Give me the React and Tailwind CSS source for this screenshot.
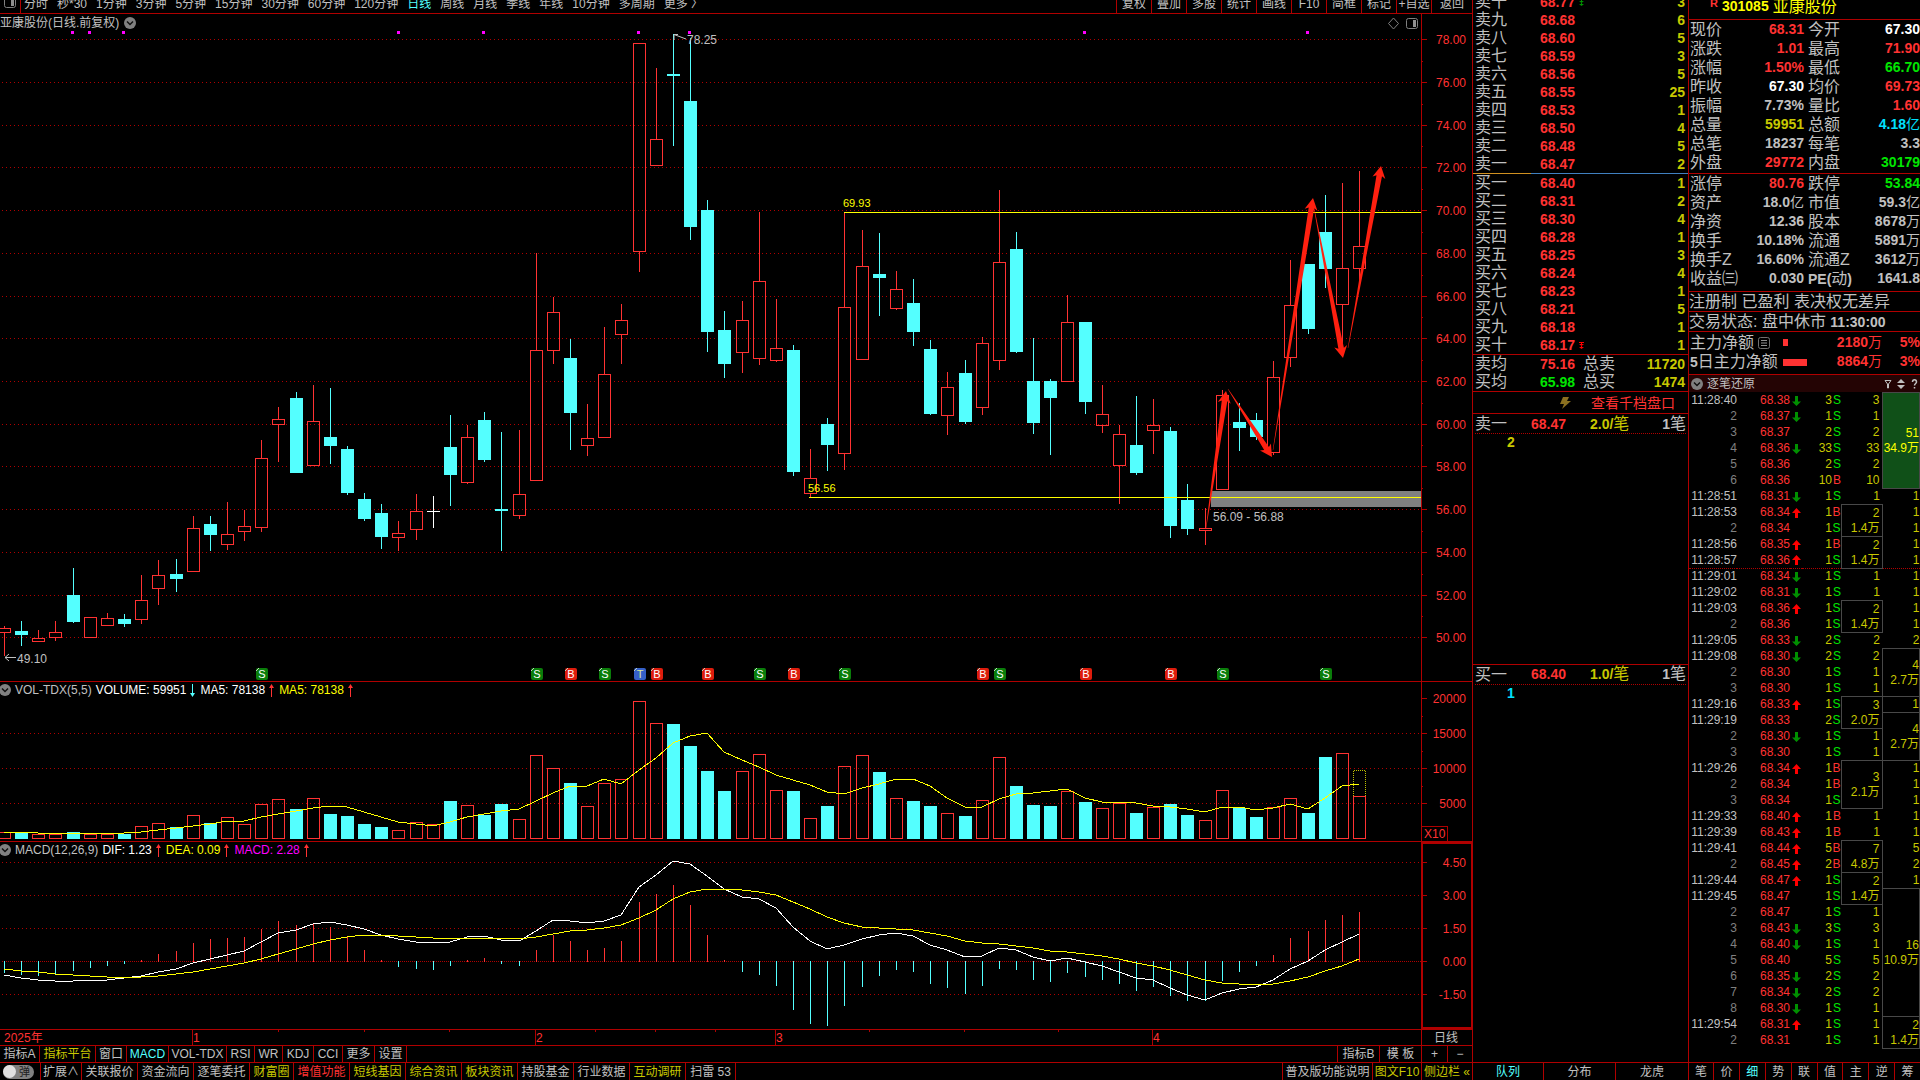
import React from "react";

const RED = "#ff3232";
const CYAN = "#54ffff";
const LINE = "#b00000";

/* kind, high, body top, body bottom, low */
const CANDLES = [
  ["R", 626, 628, 632, 656], ["C", 621, 631, 635, 646], ["R", 630, 638, 641, 641], ["R", 621, 632, 637, 641],
  ["C", 568, 595, 622, 623], ["R", 617, 617, 637, 637], ["R", 613, 618, 625, 625], ["C", 614, 619, 624, 627],
  ["R", 575, 600, 619, 624], ["R", 560, 575, 588, 605], ["C", 559, 574, 579, 592], ["R", 516, 528, 571, 571],
  ["C", 516, 524, 535, 551], ["R", 502, 534, 544, 550], ["R", 510, 526, 531, 541], ["R", 440, 458, 527, 532],
  ["R", 407, 419, 424, 462], ["C", 392, 398, 473, 473], ["R", 385, 421, 465, 465], ["C", 388, 437, 446, 464],
  ["C", 446, 449, 493, 495], ["C", 493, 499, 519, 521], ["C", 504, 513, 537, 549], ["R", 521, 533, 537, 551],
  ["R", 494, 511, 529, 540], ["W", 496, 511, 512, 528], ["C", 415, 447, 475, 506], ["R", 425, 437, 482, 484],
  ["C", 412, 420, 460, 462], ["C", 432, 509, 511, 551], ["R", 430, 494, 515, 519], ["R", 253, 350, 480, 480],
  ["R", 297, 312, 350, 364], ["C", 339, 358, 413, 450], ["R", 404, 438, 445, 456], ["R", 327, 374, 437, 437],
  ["R", 304, 320, 334, 364], ["R", 43, 43, 251, 272], ["R", 68, 139, 165, 165], ["C", 34, 74, 76, 146],
  ["C", 38, 101, 227, 240], ["C", 200, 210, 332, 352], ["C", 311, 330, 364, 378], ["R", 301, 320, 352, 373],
  ["R", 212, 281, 358, 365], ["R", 299, 348, 360, 362], ["C", 345, 350, 472, 476], ["R", 449, 478, 493, 497],
  ["C", 418, 424, 445, 471], ["R", 212, 307, 453, 470], ["R", 230, 266, 359, 359], ["C", 233, 274, 278, 316],
  ["R", 271, 289, 308, 310], ["C", 279, 303, 332, 346], ["C", 340, 349, 414, 415], ["R", 372, 387, 415, 435],
  ["C", 360, 373, 422, 424], ["R", 337, 343, 407, 415], ["R", 190, 262, 360, 370], ["C", 232, 249, 352, 353],
  ["C", 338, 381, 423, 434], ["C", 379, 381, 398, 455], ["R", 295, 322, 381, 381], ["C", 322, 322, 402, 414],
  ["R", 385, 414, 425, 433], ["R", 425, 434, 465, 504], ["C", 396, 445, 473, 475], ["R", 399, 425, 430, 454],
  ["C", 427, 431, 526, 538], ["C", 484, 500, 529, 535], ["R", 508, 528, 530, 545], ["R", 390, 395, 489, 489],
  ["C", 403, 422, 428, 451], ["C", 413, 420, 437, 440], ["R", 361, 377, 452, 455], ["R", 260, 305, 357, 367],
  ["C", 264, 264, 329, 334], ["C", 195, 232, 269, 288], ["R", 183, 268, 304, 347], ["R", 171, 246, 268, 285],
];

const VOLUME_TOPS = [
  832, 833, 834, 834, 832, 834, 834, 834, 826, 823, 827, 815, 823, 817, 824, 804, 799, 809, 798, 814,
  816, 824, 827, 830, 822, 824, 801, 805, 815, 804, 819, 755, 768, 783, 806, 783, 779, 701, 723, 724,
  746, 771, 791, 771, 754, 790, 791, 818, 806, 766, 755, 772, 798, 801, 806, 813, 816, 800, 757, 786,
  805, 806, 791, 802, 808, 803, 813, 807, 804, 815, 820, 790, 808, 817, 807, 798, 813, 757, 753, 796,
];

const MA5 = [
  832, 832, 833, 833, 833, 833, 833, 833, 832, 830, 828, 826, 824, 821, 821, 817, 814, 811, 808, 806,
  807, 812, 817, 822, 824, 826, 822, 817, 814, 811, 809, 801, 793, 786, 786, 779, 784, 770, 758, 743,
  736, 733, 752, 760, 767, 775, 780, 785, 792, 794, 788, 784, 779, 779, 786, 798, 807, 807, 799, 794,
  793, 791, 789, 798, 802, 802, 803, 806, 807, 809, 812, 807, 807, 810, 808, 804, 809, 798, 786, 784,
];

const MACD_ENDS = [
  973, 975, 976, 975, 971, 968, 966, 964, 960, 954, 951, 943, 939, 938, 937, 929, 921, 925, 923, 927,
  937, 950, 960, 967, 969, 970, 966, 960, 958, 964, 966, 950, 935, 941, 950, 948, 941, 902, 894, 885,
  905, 935, 960, 972, 975, 986, 1010, 1024, 1026, 1006, 987, 976, 970, 972, 984, 988, 994, 986, 969, 970,
  980, 982, 973, 977, 980, 984, 991, 987, 996, 1001, 1001, 981, 972, 966, 955, 938, 931, 920, 915, 912,
];

const DIF = [
  975, 978, 980, 981, 981, 980, 980, 978, 976, 972, 969, 963, 959, 955, 951, 942, 933, 930, 924, 922,
  925, 929, 935, 939, 942, 943, 942, 937, 936, 940, 941, 931, 920, 921, 923, 921, 915, 887, 875, 861,
  864, 876, 889, 897, 899, 908, 927, 941, 949, 945, 939, 935, 933, 936, 945, 950, 957, 956, 948, 950,
  957, 961, 958, 962, 966, 972, 978, 980, 988, 995, 1000, 993, 989, 987, 980, 969, 961, 950, 942, 934,
];

const DEA = [
  969, 971, 972, 974, 975, 976, 977, 977, 977, 976, 974, 972, 969, 966, 963, 959, 954, 949, 944, 940,
  937, 935, 935, 936, 937, 938, 939, 938, 938, 938, 939, 937, 934, 931, 930, 928, 925, 918, 910, 899,
  892, 889, 889, 890, 892, 895, 902, 909, 917, 923, 927, 928, 929, 930, 933, 936, 941, 943, 944, 946,
  948, 951, 952, 954, 956, 959, 963, 966, 970, 975, 980, 983, 984, 985, 984, 981, 977, 971, 966, 959,
];

const BADGES = [
  [15, "S"], [31, "S"], [33, "B"], [35, "S"], [37, "T"], [38, "B"], [41, "B"], [44, "S"], [46, "B"],
  [49, "S"], [57, "B"], [58, "S"], [63, "B"], [68, "B"], [71, "S"], [77, "S"],
];
const BADGE_FILL = { S: "#0a7d0a", B: "#dd1c0c", T: "#3560c8" };

const ARROWS = [
  [1206, 528, 1226, 391],
  [1228, 389, 1272, 457],
  [1273, 450, 1313, 198],
  [1314, 208, 1343, 358],
  [1348, 348, 1381, 166],
];

const px = (i) => 4 + Math.round(i * 17.152);
const line = (ys) => ys.map((y, i) => `${px(i)},${y}`).join(" ");

function arrowPoints([x0, y0, x1, y1]) {
  const d = Math.hypot(x1 - x0, y1 - y0);
  const ux = (x1 - x0) / d;
  const uy = (y1 - y0) / d;
  const at = (t, s) => `${(x0 + ux * t - uy * s).toFixed(1)},${(y0 + uy * t + ux * s).toFixed(1)}`;
  return [at(0, 0.2), at(d - 10, 2.8), at(d - 12, 6.5), at(d, 0), at(d - 12, -6.5), at(d - 10, -2.8), at(0, -0.2)].join(" ");
}

function Grid({ ys }) {
  return ys.map((y) => (
    <line key={y} x1="2" x2="1421" y1={y + 0.5} y2={y + 0.5} stroke={LINE} strokeDasharray="1 3" />
  ));
}

function Axis({ labels, minor }) {
  return (
    <>
      {labels.map(([y, t]) => (
        <g key={t}>
          <line x1="1421" x2="1427" y1={y + 0.5} y2={y + 0.5} stroke={LINE} />
          <text x="1466" y={y + 5} textAnchor="end" fill={RED} fontSize="12">{t}</text>
        </g>
      ))}
      {minor.map((y) => (
        <line key={y} x1="1421" x2="1423" y1={y + 0.5} y2={y + 0.5} stroke={LINE} />
      ))}
    </>
  );
}

const PRICE_YS = [39, 82, 125, 167, 210, 253, 296, 338, 381, 424, 466, 509, 552, 595, 637];

function PriceChart() {
  return (
    <svg viewBox="0 14 1472 668" className="block h-auto w-full" shapeRendering="crispEdges" role="img" aria-label="日线图">
      <Grid ys={PRICE_YS} />
      {CANDLES.map(([k, h, t, b, l], i) => {
        const x = px(i);
        if (k === "R")
          return (
            <g key={i} stroke={RED} fill="none">
              <path d={`M${x + 0.5} ${h}V${t}M${x + 0.5} ${b + 1}V${l}`} />
              <rect x={x - 5.5} y={t + 0.5} width="12" height={b - t} />
            </g>
          );
        const c = k === "C" ? CYAN : "#ffffff";
        return (
          <g key={i} fill={c}>
            <rect x={x} y={h} width="1" height={l - h} />
            <rect x={x - 6} y={t} width="13" height={b - t} />
          </g>
        );
      })}
      {[72, 89, 123, 398, 483, 638, 689, 1084, 1307].map((x) => (
        <rect key={x} x={x - 1} y="31" width="3" height="3" fill="#ff00ff" />
      ))}
      <rect x="1211" y="491" width="210" height="16" fill="#808080" />
      <path d="M844 212.5H1421M809 497.5H1421" stroke="#ffff00" />
      <text x="843" y="207" fontSize="11" fill="#ffff00">69.93</text>
      <text x="808" y="492" fontSize="11" fill="#ffff00">56.56</text>
      <text x="1213" y="521" fontSize="12" fill="#c0c0c0">56.09 - 56.88</text>
      <g fill="none" stroke="#c0c0c0" shapeRendering="auto">
        <path d="M674 34.5L686 39M674 40V34.500h4" />
        <path d="M5 657.500H16M9 654L5 657.500L9 661" />
      </g>
      <text x="687" y="44" fontSize="12" fill="#c0c0c0">78.25</text>
      <text x="17" y="663" fontSize="12" fill="#c0c0c0">49.10</text>
      {BADGES.map(([i, t]) => (
        <g key={i}>
          <rect x={px(i) - 5} y="668" width="12" height="12" rx="2" fill={BADGE_FILL[t]} shapeRendering="auto" />
          <path d={`M${px(i) - 5} 671L${px(i) - 2} 668`} stroke="#c0d0c0" fill="none" shapeRendering="auto" />
          <text x={px(i) + 1} y="678" textAnchor="middle" fontSize="11" fill={t === "T" ? "#d8e8a0" : "#ffffff"}>{t}</text>
        </g>
      ))}
      <g fill="#ff2010" shapeRendering="auto">
        {ARROWS.map((a) => (
          <polygon key={a[0]} points={arrowPoints(a)} />
        ))}
      </g>
      <path d="M1421.5 14V681M0 681.5H1472" stroke={LINE} />
      <Axis
        labels={PRICE_YS.map((y, i) => [y, (78 - 2 * i).toFixed(2)])}
        minor={[61, 104, 146, 189, 232, 275, 317, 360, 403, 445, 488, 531, 574, 616]}
      />
      <g fill="none" stroke="#808080" shapeRendering="auto">
        <path d="M1393.500 18L1398.500 23.500L1393.500 29L1388.500 23.500Z" />
        <rect x="1406.500" y="18.500" width="11" height="10" rx="2" />
      </g>
      <rect x="1413" y="20" width="3" height="7" fill="#909090" />
    </svg>
  );
}

function VolumeChart() {
  return (
    <svg viewBox="0 682 1472 160" className="block h-auto w-full" shapeRendering="crispEdges" role="img" aria-label="成交量">
      <Grid ys={[733, 768, 803]} />
      {VOLUME_TOPS.map((t, i) =>
        CANDLES[i][0] === "C" ? (
          <rect key={i} x={px(i) - 6} y={t} width="13" height={839 - t} fill={CYAN} />
        ) : (
          <rect key={i} x={px(i) - 5.5} y={t + 0.5} width="12" height={838 - t} fill="none" stroke={RED} />
        )
      )}
      <path d="M1353.500 796V770.500H1365.500V796" fill="none" stroke="#c0c000" strokeDasharray="1 1" />
      <polyline points={line(MA5)} fill="none" stroke="#ffff00" />
      <path d="M1421.500 682V841M0 841.500H1472M1421 826.500H1447.500V841" stroke={LINE} fill="none" />
      <Axis labels={[[698, "20000"], [733, "15000"], [768, "10000"], [803, "5000"]]} minor={[716, 751, 786]} />
      <text x="1424" y="838" fontSize="12" fill={RED}>X10</text>
    </svg>
  );
}

function MacdChart() {
  return (
    <svg viewBox="0 842 1472 204" className="block h-auto w-full" shapeRendering="crispEdges" role="img" aria-label="MACD">
      <Grid ys={[862, 895, 928, 994]} />
      <line x1="2" x2="1421" y1="961.500" y2="961.500" stroke={LINE} strokeDasharray="1 1" />
      {MACD_ENDS.map((e, i) => (
        <line key={i} x1={px(i) + 0.5} x2={px(i) + 0.5} y1={e <= 961 ? 962 : 961} y2={e} stroke={e <= 961 ? RED : CYAN} />
      ))}
      <polyline points={line(DIF)} fill="none" stroke="#ffffff" />
      <polyline points={line(DEA)} fill="none" stroke="#ffff00" />
      <path d="M0 1029.500H1472M0 1045.500H1472M1421.500 1030V1046M192.500 1030V1046M535.500 1030V1046M775.500 1030V1046M1152.500 1030V1046" stroke={LINE} />
      {[278, 364, 449, 595, 655, 715, 869, 964, 1058].map((x) => (
        <line key={x} x1={x + 0.5} x2={x + 0.5} y1="1030" y2="1032" stroke={LINE} />
      ))}
      <rect x="1422" y="843" width="50" height="185" fill="none" stroke={LINE} strokeWidth="2" />
      <Axis
        labels={[[862, "4.50"], [895, "3.00"], [928, "1.50"], [961, "0.00"], [994, "-1.50"]]}
        minor={[879, 912, 945, 978]}
      />
      <g fontSize="12" fill={RED}>
        <text x="4" y="1042">2025年</text>
        <text x="193" y="1042">1</text>
        <text x="536" y="1042">2</text>
        <text x="776" y="1042">3</text>
        <text x="1153" y="1042">4</text>
      </g>
      <text x="1446" y="1042" textAnchor="middle" fontSize="12" fill="#c0c0c0">日线</text>
    </svg>
  );
}

function Chevron() {
  return (
    <svg viewBox="0 0 12 12" className="size-3 shrink-0" aria-hidden="true">
      <circle cx="6" cy="6" r="6" fill="#808080" />
      <path d="M3 4.500L6 7.500L9 4.500" fill="none" stroke="#101010" strokeWidth="1.500" />
    </svg>
  );
}

function ThinArrow({ down }) {
  return (
    <svg viewBox="0 0 5 13" className="h-[13px] w-[5px] shrink-0" aria-hidden="true">
      {down ? (
        <path d="M2 0h1v9h2l-2.500 4L0 9h2z" fill={CYAN} />
      ) : (
        <path d="M2 13h1V4h2L2.500 0L0 4h2z" fill={RED} />
      )}
    </svg>
  );
}

const PERIODS = ["分时", "秒*30", "1分钟", "3分钟", "5分钟", "15分钟", "30分钟", "60分钟", "120分钟", "日线", "周线", "月线", "季线", "年线", "10分钟", "多周期", "更多 〉"];
const TOOLS = ["复权", "叠加", "多股", "统计", "画线", "F10", "简框", "标记", "+自选", "返回"];

function TopBar() {
  return (
    <nav className="flex h-[14px] items-end overflow-hidden border-b border-[#b00000] text-xs leading-[18px]">
      <button aria-label="侧栏" className="flex h-[18px] w-[21px] items-center justify-center border-r border-[#b00000]">
        <svg viewBox="0 0 12 12" className="mb-1 h-3 w-3" aria-hidden="true">
          <rect x="0.500" y="0.500" width="11" height="11" rx="2" fill="none" stroke="#808080" />
          <rect x="7" y="2" width="3" height="8" fill="#909090" />
        </svg>
      </button>
      <div className="flex h-[18px] flex-1 gap-[9px] pl-[3px] whitespace-nowrap">
        {PERIODS.map((p) => (
          <button key={p} className={p === "日线" ? "text-[#54ffff]" : ""}>{p}</button>
        ))}
      </div>
      {TOOLS.map((t) => (
        <button key={t} className="h-[18px] w-[35px] shrink-0 border-l border-[#b00000] whitespace-nowrap last:w-[41px]">{t}</button>
      ))}
    </nav>
  );
}

const INDICATORS = [
  ["指标A", "w-[40px]"], ["指标平台", "w-[56px] text-[#c8c800]"], ["窗口", "w-[31px]"], ["MACD", "w-[42px] text-[#54ffff]"],
  ["VOL-TDX", "w-[58px]"], ["RSI", "w-[28px]"], ["WR", "w-[28px]"], ["KDJ", "w-[31px]"], ["CCI", "w-[29px]"], ["更多", "w-[32px]"], ["设置", "w-[32px]"],
];
const FEATURES = [
  ["扩展∧", "w-[41px]"], ["关联报价", "w-[56px]"], ["资金流向", "w-[56px]"], ["逐笔委托", "w-[56px]"], ["财富圈", "w-[44px] text-[#c8c800]"],
  ["增值功能", "w-[56px] text-[#ff3232]"], ["短线基因", "w-[56px] text-[#c8c800]"], ["综合资讯", "w-[56px] text-[#c8c800]"],
  ["板块资讯", "w-[56px] text-[#c8c800]"], ["持股基金", "w-[56px]"], ["行业数据", "w-[56px]"], ["互动调研", "w-[56px] text-[#c8c800]"], ["扫雷 53", "w-[50px]"],
];

function Cells({ items, side }) {
  return items.map(([t, c]) => (
    <button key={t} className={`${c} ${side === "l" ? "border-l" : "border-r"} shrink-0 border-[#b00000] whitespace-nowrap`}>{t}</button>
  ));
}

function BottomBars() {
  return (
    <>
      <nav className="flex h-[17px] justify-between border-b border-[#b00000] text-xs leading-4">
        <div className="flex"><Cells items={INDICATORS} side="r" /></div>
        <div className="flex">
          <Cells side="l" items={[["指标B", "w-[42px]"], ["模 板", "w-[42px]"], ["+", "w-[26px]"], ["−", "w-[25px]"]]} />
        </div>
      </nav>
      <nav className="flex h-[17px] justify-between text-xs leading-[18px]">
        <div className="flex">
          <label className="flex w-[41px] items-center border-r border-[#b00000] pl-[3px]">
            <input type="checkbox" className="peer sr-only" />
            <span className="flex h-[14px] w-[31px] items-center justify-between rounded-full bg-[#808080] pr-1 text-[11px] leading-[14px] text-[#202020]">
              <span className="size-[13px] rounded-full bg-[#e0e0e0]" />弹
            </span>
          </label>
          <Cells items={FEATURES} side="r" />
        </div>
        <div className="flex">
          <Cells side="l" items={[["普及版功能说明", "w-[90px]"], ["图文F10", "w-[49px] text-[#c8c800]"], ["侧边栏 «", "w-[51px] text-[#c8c800]"]]} />
        </div>
      </nav>
    </>
  );
}

const SELLS = [
  ["卖十", "68.77", 3, "up"], ["卖九", "68.68", 6], ["卖八", "68.60", 5], ["卖七", "68.59", 3], ["卖六", "68.56", 5],
  ["卖五", "68.55", 25], ["卖四", "68.53", 1], ["卖三", "68.50", 4], ["卖二", "68.48", 5], ["卖一", "68.47", 2],
];
const BUYS = [
  ["买一", "68.40", 1], ["买二", "68.31", 2], ["买三", "68.30", 4], ["买四", "68.28", 1], ["买五", "68.25", 3],
  ["买六", "68.24", 4], ["买七", "68.23", 1], ["买八", "68.21", 5], ["买九", "68.18", 1], ["买十", "68.17", 1, "down"],
];

function Depth({ rows }) {
  return (
    <table className="w-full table-fixed border-collapse">
      <tbody>
        {rows.map(([n, p, q, m]) => (
          <tr key={n} className="h-[18px] leading-[18px]">
            <th className="w-[67px] p-0 pl-[2px] text-left text-base leading-[18px] font-normal">{n}</th>
            <td className="p-0 text-sm leading-[18px] font-bold text-[#ff3232]">
              <span className="flex items-center gap-1">
                {p}
                {m && (
                  <svg viewBox="0 0 5 7" className="h-[7px] w-[5px]" fill={m === "up" ? "#009000" : "#ff0000"} aria-hidden="true">
                    <path d="M0 0h5v1H3v1h2L2.500 4L0 2h2V1H0zM2 4h1v1h2L2.500 7L0 5h2z" />
                  </svg>
                )}
              </span>
            </td>
            <td className="w-[60px] p-0 pr-[3px] text-right text-sm leading-[18px] font-bold text-[#c8c800]">{q}</td>
          </tr>
        ))}
      </tbody>
    </table>
  );
}

function QueueHead({ name, price, avg, count }) {
  return (
    <div className="mx-[2px] flex h-5 items-center border-b border-dotted border-[#b00000] text-base leading-[19px] whitespace-nowrap">
      <span className="w-14">{name}</span>
      <b className="w-[59px] text-sm font-bold text-[#ff3232]">{price}</b>
      <span className="flex-1 text-[#c8c800]"><b className="text-sm font-bold">{avg}/</b>笔</span>
      <span><b className="text-sm font-bold">{count}</b>笔</span>
    </div>
  );
}

function OrderBook() {
  return (
    <section className="flex w-[216px] shrink-0 flex-col border-l border-[#b00000]">
      <div className="flex h-[173px] flex-col justify-end overflow-hidden"><Depth rows={SELLS} /></div>
      <div className="flex h-px"><div className="w-[27%] bg-[#d09020]" /><div className="flex-1 bg-[#4080c0]" /></div>
      <Depth rows={BUYS} />
      <div className="grid grid-cols-[67px_41px_1fr_auto] border-y border-[#b00000] pr-[3px] pl-[2px] text-base leading-[18px]">
        <span>卖均</span><b className="-ml-[2px] text-sm leading-[18px] font-bold text-[#ff3232]">75.16</b><span>总卖</span><b className="text-right text-sm leading-[18px] font-bold text-[#c8c800]">11720</b>
        <span>买均</span><b className="-ml-[2px] text-sm leading-[18px] font-bold text-[#00e600]">65.98</b><span>总买</span><b className="text-right text-sm leading-[18px] font-bold text-[#c8c800]">1474</b>
      </div>
      <div className="flex h-[22px] items-center justify-end gap-5 border-b border-[#b00000] pr-[13px]">
        <svg viewBox="0 0 12 12" className="size-3" aria-hidden="true"><path d="M4 0h6L8 4h4L3 12l2-5H1z" fill="#8a7020" /></svg>
        <a href="#depth" className="text-sm leading-5 text-[#ff3232]">查看千档盘口</a>
      </div>
      <div className="flex flex-[27] flex-col border-b border-[#b00000]">
        <QueueHead name="卖一" price="68.47" avg="2.0" count="1" />
        <b className="pl-[34px] text-sm leading-4 font-bold text-[#c8c800]">2</b>
      </div>
      <div className="flex flex-[43] flex-col">
        <QueueHead name="买一" price="68.40" avg="1.0" count="1" />
        <b className="pl-[34px] text-sm leading-4 font-bold text-[#00e0ff]">1</b>
      </div>
      <nav className="grid h-[18px] grid-cols-[70px_72px_1fr] border-t border-[#b00000] text-xs leading-[19px]">
        <button className="text-[#54ffff]">队列</button>
        <button className="border-l border-[#b00000]">分布</button>
        <button className="border-l border-[#b00000]">龙虎</button>
      </nav>
    </section>
  );
}

const R = "text-[#ff3232]";
const G = "text-[#00e600]";
const W = "text-white";
const N = "text-[#c0c0c0]";
const Y = "text-[#c8c800]";
const B = "text-[#00e0ff]";
const QUOTE_A = [
  ["现价", "68.31", R, "今开", "67.30", W], ["涨跌", "1.01", R, "最高", "71.90", R], ["涨幅", "1.50%", R, "最低", "66.70", G],
  ["昨收", "67.30", W, "均价", "69.73", R], ["振幅", "7.73%", N, "量比", "1.60", R], ["总量", "59951", Y, "总额", "4.18亿", B],
  ["总笔", "18237", N, "每笔", "3.3", N], ["外盘", "29772", R, "内盘", "30179", G],
];
const QUOTE_B = [
  ["涨停", "80.76", R, "跌停", "53.84", G], ["资产", "18.0亿", N, "市值", "59.3亿", N], ["净资", "12.36", N, "股本", "8678万", N],
  ["换手", "10.18%", N, "流通", "5891万", N], ["换手Z", "16.60%", N, "流通Z", "3612万", N], ["收益㈢", "0.030", N, "PE(动)", "1641.8", N],
];

function Num({ v, c }) {
  const m = v.match(/^([\d.%]+)(.*)$/);
  return <dd className={`${c} text-sm leading-[19px]`}><b className="font-bold">{m[1]}</b>{m[2]}</dd>;
}

function Quote({ rows }) {
  return rows.map(([a, b, c, d, e, f]) => (
    <div key={a} className="grid h-[19px] grid-cols-[115px_1fr] text-base leading-[19px] whitespace-nowrap">
      <dl className="flex justify-between pl-px"><dt>{a}</dt><Num v={b} c={c} /></dl>
      <dl className="flex justify-between pl-1">
        <dt>{d.startsWith("PE") ? <><b className="text-sm font-bold">PE(</b>动<b className="text-sm font-bold">)</b></> : d}</dt>
        <Num v={e} c={f} />
      </dl>
    </div>
  ));
}

/* time, price, direction, quantity, side, merged lot, merged order; [rows, quantity, amount, filled] spans rows, null is covered */
const TICKS = [
  ["11:28:40", "68.38", "d", 3, "S", 3, [6, 51, "34.9万", true]],
  [2, "68.37", "d", 1, "S", 1, null],
  [3, "68.37", "", 2, "S", 2, null],
  [4, "68.36", "d", 33, "S", 33, null],
  [5, "68.36", "", 2, "S", 2, null],
  [6, "68.36", "", 10, "B", 10, null],
  ["11:28:51", "68.31", "d", 1, "S", 1, 1],
  ["11:28:53", "68.34", "u", 1, "B", [2, 2, "1.4万"], 1],
  [2, "68.34", "", 1, "S", null, 1],
  ["11:28:56", "68.35", "u", 1, "B", [2, 2, "1.4万"], 1],
  ["11:28:57", "68.36", "u", 1, "S", null, 1],
  ["11:29:01", "68.34", "d", 1, "S", 1, 1],
  ["11:29:02", "68.31", "d", 1, "S", 1, 1],
  ["11:29:03", "68.36", "u", 1, "S", [2, 2, "1.4万"], 1],
  [2, "68.36", "", 1, "S", null, 1],
  ["11:29:05", "68.33", "d", 2, "S", 2, 2],
  ["11:29:08", "68.30", "d", 2, "S", 2, [3, 4, "2.7万"]],
  [2, "68.30", "", 1, "S", 1, null],
  [3, "68.30", "", 1, "S", 1, null],
  ["11:29:16", "68.33", "u", 1, "S", [2, 3, "2.0万"], [1, 1, ""]],
  ["11:29:19", "68.33", "", 2, "S", null, [3, 4, "2.7万"]],
  [2, "68.30", "d", 1, "S", 1, null],
  [3, "68.30", "", 1, "S", 1, null],
  ["11:29:26", "68.34", "u", 1, "B", [3, 3, "2.1万"], 1],
  [2, "68.34", "", 1, "B", null, 1],
  [3, "68.34", "", 1, "S", null, 1],
  ["11:29:33", "68.40", "u", 1, "B", 1, 1],
  ["11:29:39", "68.43", "u", 1, "B", 1, 1],
  ["11:29:41", "68.44", "u", 5, "B", [2, 7, "4.8万"], 5],
  [2, "68.45", "u", 2, "B", null, 2],
  ["11:29:44", "68.47", "u", 1, "S", [2, 2, "1.4万"], 1],
  ["11:29:45", "68.47", "", 1, "S", null, [8, 16, "10.9万"]],
  [2, "68.47", "", 1, "S", 1, null],
  [3, "68.43", "d", 3, "S", 3, null],
  [4, "68.40", "d", 1, "S", 1, null],
  [5, "68.40", "", 5, "S", 5, null],
  [6, "68.35", "d", 2, "S", 2, null],
  [7, "68.34", "d", 2, "S", 2, null],
  [8, "68.30", "d", 1, "S", 1, null],
  ["11:29:54", "68.31", "u", 1, "S", 1, [2, 2, "1.4万"]],
  [2, "68.31", "", 1, "S", 1, null],
];

function Merged({ v, last }) {
  if (v === null) return null;
  const pad = last ? "pr-0" : "pr-[2px]";
  if (!Array.isArray(v)) return <td className={`p-0 ${pad} text-right`}>{v}</td>;
  const [span, qty, amount, filled] = v;
  return (
    <td rowSpan={span} className={`border border-[#484848] p-0 ${pad} text-right align-middle leading-[15px] ${filled ? "bg-[#105018] text-[#ffff00]" : ""}`}>
      <span className="block">{qty}</span>
      {amount && <span className="block whitespace-nowrap">{amount}</span>}
    </td>
  );
}

function Ticks() {
  return (
    <table className="w-full table-fixed border-collapse text-xs text-[#c8c800]">
      <colgroup>
        <col className="w-[48px]" /><col className="w-[53px]" /><col className="w-[12px]" /><col className="w-[30px]" /><col className="w-[9px]" /><col className="w-[41px]" /><col />
      </colgroup>
      <tbody>
        {TICKS.map(([t, p, dir, q, s, a, b], i) => (
          <tr key={i} className={`h-4 leading-[15px] ${i === 10 ? "border-b border-dotted border-b-[#b00000]" : ""}`}>
            <td className={`p-0 text-right ${typeof t === "number" ? "text-[#808080]" : "text-[#c0c0c0]"}`}>{t}</td>
            <td className="p-0 text-right text-[#ff3232]">{p}</td>
            <td className="p-0">
              {dir && (
                <svg viewBox="0 0 9 10" className="mx-auto h-[10px] w-[9px]" role="img" aria-label={dir === "u" ? "升" : "降"}>
                  {dir === "u" ? <path d="M4.500 0L9 5H6V10H3V5H0z" fill="#ff0000" /> : <path d="M4.500 10L9 5.500H6V0H3V5.500H0z" fill="#009000" />}
                </svg>
              )}
            </td>
            <td className="p-0 text-right">{q}</td>
            <td className={`p-0 text-right ${s === "S" ? "text-[#00e600]" : "text-[#ff3232]"}`}>{s}</td>
            <Merged v={a} />
            <Merged v={b} last />
          </tr>
        ))}
      </tbody>
    </table>
  );
}

function QuotePanel() {
  return (
    <section className="flex w-[232px] shrink-0 flex-col overflow-hidden border-l border-[#b00000]">
      <h1 className="flex h-5 items-end gap-1 border-b border-[#b00000] pb-[3px] pl-[21px] text-sm leading-[19px] text-[#ffff00]">
        <span className="mb-[7px] text-[11px] leading-3 font-bold text-[#ff3232]">R</span>
        <b className="font-bold">301085</b><span className="text-base leading-[19px]">亚康股份</span>
      </h1>
      <div className="border-b border-[#b00000] pb-px"><Quote rows={QUOTE_A} /></div>
      <div className="border-b border-[#b00000] pb-[3px]"><Quote rows={QUOTE_B} /></div>
      <p className="h-5 border-b border-[#b00000] text-base leading-[19px] whitespace-nowrap">注册制 已盈利 表决权无差异</p>
      <p className="h-5 border-b border-[#b00000] text-base leading-[19px] whitespace-nowrap">交易状态: 盘中休市 <b className="text-sm font-bold">11:30:00</b></p>
      <div className="grid grid-cols-[93px_40px_59px_1fr] border-b border-[#b00000] pt-px pb-[2px] pl-px text-base leading-[19px] whitespace-nowrap">
        <span className="flex items-center gap-1">主力净额
          <svg viewBox="0 0 12 12" className="size-3 shrink-0" aria-hidden="true"><rect x="0.500" y="0.500" width="11" height="11" rx="2" fill="none" stroke="#707070" /><path d="M3 3.500h6M3 6h6M3 8.500h6" stroke="#909090" /></svg>
        </span>
        <span className="flex items-center"><i className="h-[7px] w-[5px] bg-[#ff3232]" /></span>
        <span className="text-right text-sm leading-[19px] text-[#ff3232]"><b className="font-bold">2180</b>万</span>
        <b className="text-right text-sm leading-[19px] font-bold text-[#ff3232]">5%</b>
        <span><b className="text-sm font-bold">5</b>日主力净额</span>
        <span className="flex items-center"><i className="h-[7px] w-6 bg-[#ff3232]" /></span>
        <span className="text-right text-sm leading-[19px] text-[#ff3232]"><b className="font-bold">8864</b>万</span>
        <b className="text-right text-sm leading-[19px] font-bold text-[#ff3232]">3%</b>
      </div>
      <div className="flex h-[17px] items-center gap-1 bg-[#240404] px-[2px] text-xs">
        <Chevron /><h2 className="flex-1">逐笔还原</h2>
        <svg viewBox="0 0 34 10" className="h-[10px] w-[34px]" aria-hidden="true">
          <path d="M1 1.500h6L4.500 5v4h-1V5z" fill="none" stroke="#c0c0c0" />
          <path d="M13 4L17 0L21 4zM13 6L17 10L21 6z" fill="#c0c0c0" />
          <path d="M28.500 3c0-3 4-3 4 0c0 1.500-2 1.500-2 3.500M30.500 8v1.500" fill="none" stroke="#c0c0c0" strokeWidth="1.500" />
        </svg>
      </div>
      <div className="flex-1"><Ticks /></div>
      <nav className="grid h-[18px] grid-cols-[24px_repeat(8,minmax(0,1fr))] border-t border-[#b00000] text-xs leading-[19px]">
        {["笔", "价", "细", "势", "联", "值", "主", "逆", "筹"].map((t) => (
          <button key={t} className={`border-l border-[#b00000] first:border-l-0 ${t === "细" ? "text-[#54ffff]" : ""}`}>{t}</button>
        ))}
      </nav>
    </section>
  );
}

export default function App() {
  return (
    <div className="flex min-h-screen bg-black font-['Liberation_Sans','Noto_Sans_CJK_SC',sans-serif] text-[#c0c0c0]">
      <main className="flex min-w-0 flex-1 flex-col">
        <TopBar />
        <div className="relative">
          <h2 className="absolute top-0 left-0 flex items-center gap-[5px] text-xs leading-[18px]">亚康股份(日线.前复权)<Chevron /></h2>
          <PriceChart />
        </div>
        <div className="relative">
          <div className="absolute top-0 -left-px flex items-center gap-1 text-xs leading-4">
            <Chevron /><span>VOL-TDX(5,5)</span>
            <span className="text-white">VOLUME: 59951</span><ThinArrow down />
            <span className="pl-px text-white">MA5: 78138</span><ThinArrow />
            <span className="pl-px text-[#ffff00]">MA5: 78138</span><ThinArrow />
          </div>
          <VolumeChart />
        </div>
        <div className="relative">
          <div className="absolute top-0 -left-px flex items-center gap-1 text-xs leading-4">
            <Chevron /><span>MACD(12,26,9)</span>
            <span className="text-white">DIF: 1.23</span><ThinArrow />
            <span className="pl-px text-[#ffff00]">DEA: 0.09</span><ThinArrow />
            <span className="pl-px text-[#ff00ff]">MACD: 2.28</span><ThinArrow />
          </div>
          <MacdChart />
        </div>
        <BottomBars />
      </main>
      <OrderBook />
      <QuotePanel />
    </div>
  );
}
